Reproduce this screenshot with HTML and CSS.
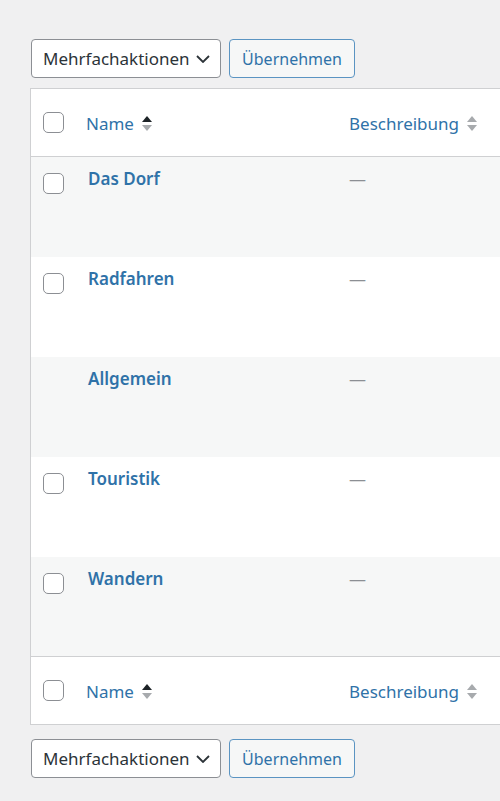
FILE: index.html
```html
<!DOCTYPE html>
<html lang="de">
<head>
<meta charset="utf-8">
<title>Kategorien</title>
<link rel="stylesheet" href="styles.css">
</head>
<body>
<div class="page">
  <div class="tablenav top">
    <div class="select">
      <span>Mehrfachaktionen</span>
      <svg class="chev" width="14" height="8" viewBox="0 0 14 8"><polyline points="1,1 7,7 13,1" fill="none" stroke="#2c3338" stroke-width="1.8"/></svg>
    </div>
    <button class="btn">Übernehmen</button>
  </div>

  <div class="table-wrap">
    <table class="list">
      <thead>
        <tr class="head">
          <th class="cb"><span class="box"></span></th>
          <th class="col-name"><a>Name</a><span class="sort"><i class="up dark"></i><i class="down"></i></span></th>
          <th class="col-desc"><a>Beschreibung</a><span class="sort"><i class="up"></i><i class="down"></i></span></th>
        </tr>
      </thead>
      <tbody>
        <tr class="alt">
          <td class="cb"><span class="box"></span></td>
          <td class="name"><a>Das Dorf</a></td>
          <td class="desc">—</td>
        </tr>
        <tr>
          <td class="cb"><span class="box"></span></td>
          <td class="name"><a>Radfahren</a></td>
          <td class="desc">—</td>
        </tr>
        <tr class="alt">
          <td class="cb"></td>
          <td class="name"><a>Allgemein</a></td>
          <td class="desc">—</td>
        </tr>
        <tr>
          <td class="cb"><span class="box"></span></td>
          <td class="name"><a>Touristik</a></td>
          <td class="desc">—</td>
        </tr>
        <tr class="alt">
          <td class="cb"><span class="box"></span></td>
          <td class="name"><a>Wandern</a></td>
          <td class="desc">—</td>
        </tr>
      </tbody>
      <tfoot>
        <tr class="head foot">
          <th class="cb"><span class="box"></span></th>
          <th class="col-name"><a>Name</a><span class="sort"><i class="up dark"></i><i class="down"></i></span></th>
          <th class="col-desc"><a>Beschreibung</a><span class="sort"><i class="up"></i><i class="down"></i></span></th>
        </tr>
      </tfoot>
    </table>
  </div>

  <div class="tablenav bottom">
    <div class="select">
      <span>Mehrfachaktionen</span>
      <svg class="chev" width="14" height="8" viewBox="0 0 14 8"><polyline points="1,1 7,7 13,1" fill="none" stroke="#2c3338" stroke-width="1.8"/></svg>
    </div>
    <button class="btn">Übernehmen</button>
  </div>
</div>
</body>
</html>
```

FILE: styles.css
```css
html, body {
  margin: 0;
  padding: 0;
  background: #f0f0f1;
  overflow: hidden;
}
body {
  font-family: "Noto Sans", "Open Sans", sans-serif;
  color: #2c3338;
}
.page {
  padding-left: 30px;
  width: 650px;
}
.tablenav {
  display: flex;
  gap: 8px;
  padding-left: 1px;
}
.tablenav.top {
  padding-top: 39px;
  padding-bottom: 10px;
}
.tablenav.bottom {
  padding-top: 14px;
}
.select {
  box-sizing: border-box;
  width: 190px;
  height: 39px;
  border: 1px solid #8c8f94;
  border-radius: 4px;
  background: #fff;
  display: flex;
  align-items: center;
  justify-content: space-between;
  padding: 0 10px 0 11px;
  font-size: 17px;
  color: #2c3338;
}
.chev {
  display: block;
  margin-top: 1px;
}
.btn {
  box-sizing: border-box;
  width: 126px;
  height: 39px;
  border: 1px solid #5b94c2;
  border-radius: 4px;
  background: #f6f7f7;
  color: #2f72a8;
  font-family: inherit;
  font-size: 16px;
  padding: 0;
}
.table-wrap {
  width: 640px;
}
.list {
  border-collapse: collapse;
  border: 1px solid #cfd0d2;
  background: #fff;
  width: 100%;
  table-layout: fixed;
}
.list a {
  color: #2f72a8;
  text-decoration: none;
}
.cb {
  width: 32px;
  padding: 0 0 0 12px;
  text-align: left;
}
.col-name {
  width: 252px;
}
.box {
  display: block;
  box-sizing: border-box;
  width: 21px;
  height: 21px;
  border: 1px solid #8c8f94;
  border-radius: 5px;
  background: #fff;
}
.head th {
  height: 65px;
  vertical-align: middle;
  font-weight: 400;
  font-size: 17px;
  text-align: left;
}
thead .head {
  border-bottom: 1px solid #cfd0d2;
}
tfoot .head {
  border-top: 1px solid #cfd0d2;
}
.col-name {
  padding-left: 11px;
}
.col-desc {
  padding-left: 10px;
}
.head th a {
  vertical-align: middle;
}
.sort {
  display: inline-flex;
  flex-direction: column;
  gap: 3px;
  margin-left: 8px;
  vertical-align: middle;
}
.sort i {
  display: block;
  width: 0;
  height: 0;
  border-left: 5px solid transparent;
  border-right: 5px solid transparent;
}
.sort .up {
  border-bottom: 6px solid #a7aaad;
}
.sort .up.dark {
  border-bottom-color: #1d2327;
}
.sort .down {
  border-top: 6px solid #a7aaad;
}
tbody tr {
  height: 100px;
}
tbody tr.alt {
  background: #f6f7f7;
}
tbody td {
  vertical-align: top;
  font-size: 17px;
  line-height: 24px;
}
tbody td.cb {
  padding-top: 16px;
}
tbody td.name {
  padding: 10px 0 0 13px;
  font-weight: 600;
}
tbody td.desc {
  padding: 10px 0 0 10px;
  color: #8c8f94;
}
```
